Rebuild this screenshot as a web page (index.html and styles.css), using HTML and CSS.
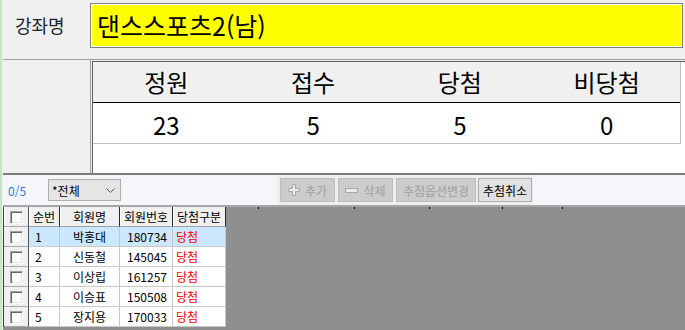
FILE: index.html
```html
<!DOCTYPE html>
<html lang="ko">
<head>
<meta charset="utf-8">
<link rel="stylesheet" href="styles.css">
</head>
<body>
<div class="page">
  <div class="title-row">
    <div class="label">강좌명</div>
    <div class="title-box">댄스스포츠2(남)</div>
  </div>
  <div class="stats-row">
    <div class="stats-side"></div>
    <div class="stats-panel">
      <div class="stats-table">
        <div class="st-head"><span>정원</span><span>접수</span><span>당첨</span><span>비당첨</span></div>
        <div class="st-data"><span>23</span><span>5</span><span>5</span><span>0</span></div>
      </div>
    </div>
  </div>
  <div class="toolbar">
    <span class="count">0/5</span>
    <div class="combo"><span>*전체</span>
      <svg class="chev" width="9" height="5" viewBox="0 0 9 5"><polyline points="0.5,0.5 4.5,4.5 8.5,0.5" fill="none" stroke="#555" stroke-width="1"/></svg>
    </div>
    <div class="btn-group">
      <button class="btn dis w55" disabled>
        <svg width="12" height="12" viewBox="0 0 12 12"><path d="M4.5 0.5H7.5V4.5H11.5V7.5H7.5V11.5H4.5V7.5H0.5V4.5H4.5Z" fill="#eaeaea" stroke="#a8a8a8" stroke-width="1"/></svg>
        <span>추가</span></button>
      <button class="btn dis w55" disabled>
        <svg width="13" height="5" viewBox="0 0 13 5"><rect x="0.5" y="0.5" width="12" height="4" fill="#eaeaea" stroke="#a8a8a8" stroke-width="1"/></svg>
        <span>삭제</span></button>
      <button class="btn dis w80" disabled><span>추첨옵션변경</span></button>
      <button class="btn en w54"><span>추첨취소</span></button>
    </div>
  </div>
  <div class="grid-area">
    <table class="grid">
      <colgroup><col class="c1"><col class="c2"><col class="c3"><col class="c4"><col class="c5"></colgroup>
      <thead>
        <tr><th class="chk-cell"><span class="chk"></span></th><th>순번</th><th>회원명</th><th>회원번호</th><th>당첨구분</th></tr>
      </thead>
      <tbody>
        <tr class="sel"><td class="chk-cell"><span class="chk"></span></td><td class="no">1</td><td class="nm">박홍대</td><td class="id">180734</td><td class="win">당첨</td></tr>
        <tr><td class="chk-cell"><span class="chk"></span></td><td class="no">2</td><td class="nm">신동철</td><td class="id">145045</td><td class="win">당첨</td></tr>
        <tr><td class="chk-cell"><span class="chk"></span></td><td class="no">3</td><td class="nm">이상립</td><td class="id">161257</td><td class="win">당첨</td></tr>
        <tr><td class="chk-cell"><span class="chk"></span></td><td class="no">4</td><td class="nm">이승표</td><td class="id">150508</td><td class="win">당첨</td></tr>
        <tr><td class="chk-cell"><span class="chk"></span></td><td class="no">5</td><td class="nm">장지용</td><td class="id">170033</td><td class="win">당첨</td></tr>
      </tbody>
    </table>
    <div class="grid-empty">
      <div class="ticks"><span class="t33"></span><span class="t96"></span><span class="t75"></span><span class="t73"></span><span class="t60"></span></div>
    </div>
  </div>
</div>
</body>
</html>
```
FILE: styles.css
```css
* { box-sizing: border-box; margin: 0; padding: 0; }
body {
  margin: 0;
  background: #f0f0f0;
  font-family: "Noto Sans CJK KR", "Noto Sans", sans-serif;
  overflow: hidden;
}
.page {
  width: 685px;
  height: 330px;
  border-left: 2px solid #c8e3c8;
  padding-left: 1px;
  display: flex;
  flex-direction: column;
}
.title-row {
  height: 60px;
  flex: none;
  border-bottom: 1px solid #a0a0a0;
  display: flex;
  align-items: flex-start;
}
.label {
  width: 87px;
  height: 45px;
  margin-top: 3px;
  padding-left: 12px;
  font-size: 18px;
  line-height: 45px;
  color: #1b2433;
}
.title-box {
  width: 593px;
  height: 45px;
  margin-top: 3px;
  border: 1px solid #7f7f7f;
  box-shadow: inset 0 0 0 1px #fff;
  background: #ffff00;
  font-size: 25px;
  line-height: 43px;
  padding-left: 6px;
  color: #000;
}
.stats-row {
  height: 115px;
  flex: none;
  display: flex;
  border-bottom: 2px solid #7d7d7d;
}
.stats-side {
  width: 88px;
  border-right: 1px solid #a0a0a0;
}
.stats-panel {
  flex: 1;
  margin-left: 1px;
  margin-top: 1px;
  border-left: 1px solid #606060;
  border-top: 1px solid #606060;
  background: #fff;
}
.stats-table {
  width: 588px;
  border-right: 1px solid #c0c0c0;
}
.st-head, .st-data {
  display: grid;
  grid-template-columns: repeat(4, 1fr);
  height: 41px;
  font-size: 24px;
  text-align: center;
  color: #000;
}
.st-head {
  background: #f0f0f0;
  border-bottom: 1px solid #000;
  line-height: 40px;
}
.st-data {
  border-bottom: 1px solid #c0c0c0;
  line-height: 40px;
  padding-top: 2px;
}
.toolbar {
  height: 32px;
  flex: none;
  border-bottom: 2px solid #a6a6a6;
  background: #f4f6fa;
  display: flex;
  align-items: center;
}
.count {
  width: 45px;
  padding-left: 5px;
  color: #2f7bd6;
  font-size: 12px;
}
.combo {
  width: 73px;
  height: 22px;
  border: 1px solid #adadad;
  background: #e5e5e5;
  font-size: 12px;
  display: flex;
  align-items: center;
  justify-content: space-between;
  padding: 0 5px 0 3px;
  color: #000;
}
.btn-group {
  margin-left: 156px;
  align-self: stretch;
  background: #eeeeee;
  display: flex;
  align-items: center;
  padding: 0 1px 0 3px;
}
.btn {
  height: 24px;
  font-family: inherit;
  font-size: 12px;
  display: flex;
  align-items: center;
  justify-content: center;
  gap: 5px;
  margin-right: 3px;
}
.btn.dis {
  background: #cccccc;
  border: 1px solid #bfbfbf;
  color: #a0a0a0;
}
.btn.en {
  background: #e1e1e1;
  border: 1px solid #adadad;
  color: #000;
  margin-right: 0;
}
.w55 { width: 55px; }
.w80 { width: 80px; margin-right: 2px; }
.w54 { width: 54px; }
.grid-area {
  flex: 1;
  display: flex;
  background: #8f8f8f;
}
.grid {
  border-left: 1px solid #3a3a3a;
  border-collapse: separate;
  border-spacing: 0;
  table-layout: fixed;
  width: 223px;
  align-self: flex-start;
  font-size: 12px;
  color: #000;
}
.c1 { width: 25px; }
.c2 { width: 31px; }
.c3 { width: 60px; }
.c4 { width: 53px; }
.c5 { width: 53px; }
.grid th {
  height: 20px;
  background: #f0f0f0;
  border-right: 1px solid #2a2a2a;
  border-bottom: 1px solid #a0a0a0;
  box-shadow: inset 1px 0 #fff;
  font-weight: normal;
  text-align: center;
  padding: 0;
  line-height: 18px;
}
.grid td {
  height: 20px;
  background: #fff;
  border-right: 1px solid #c8c8c8;
  border-bottom: 1px solid #c8c8c8;
  padding: 0;
  line-height: 19px;
  white-space: nowrap;
}
.grid .chk-cell {
  background: #f0f0f0;
  border-right: 1px solid #505050;
  border-bottom: 1px solid #a8a8a8;
  text-align: center;
}
.grid tr.sel td:not(.chk-cell) { background: #cce8ff; }
.chk {
  display: inline-block;
  width: 13px;
  height: 13px;
  vertical-align: middle;
  background: #fff;
  border: 1px solid;
  border-color: #a0a0a0 #fff #fff #a0a0a0;
  box-shadow: inset 1px 1px #696969, inset -1px -1px #e3e3e3;
  margin-top: -2px;
}
.no { padding-left: 6px !important; }
.nm { text-align: center; }
.id { text-align: right; padding-right: 5px !important; }
.win { color: #ff0000; padding-left: 3px !important; }
.grid-empty { flex: 1; }
.ticks {
  display: flex;
  height: 2px;
}
.ticks span { border-right: 1px solid #000; height: 2px; }
.t33 { width: 33px; }
.t96 { width: 96px; }
.t75 { width: 75px; }
.t73 { width: 73px; }
.t60 { width: 60px; }
```
